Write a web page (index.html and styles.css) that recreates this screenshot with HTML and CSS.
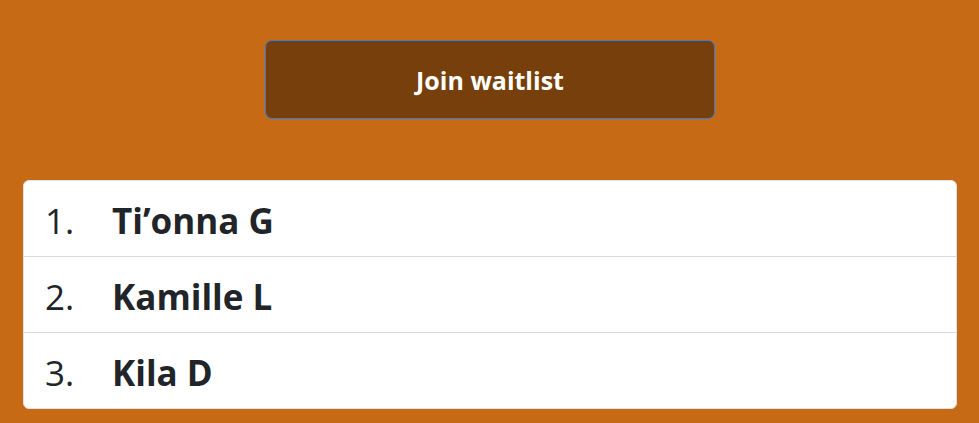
FILE: index.html
```html
<!DOCTYPE html>
<html lang="en">
<head>
<meta charset="utf-8">
<title>Waitlist</title>
<link rel="stylesheet" href="styles.css">
</head>
<body>
<main class="page">
  <div class="actions">
    <button class="join-btn" type="button">Join waitlist</button>
  </div>
  <ol class="waitlist">
    <li class="waitlist-item"><span class="num">1.</span><span class="name">Ti’onna G</span></li>
    <li class="waitlist-item"><span class="num">2.</span><span class="name">Kamille L</span></li>
    <li class="waitlist-item"><span class="num">3.</span><span class="name">Kila D</span></li>
  </ol>
</main>
</body>
</html>
```
FILE: styles.css
```css
html, body {
  margin: 0;
  padding: 0;
  background: #c66a16;
}
body {
  font-family: "Open Sans", "Noto Sans", sans-serif;
  color: #212529;
}
.page {
  padding: 40px 22px 0 23px;
}
.actions {
  display: flex;
  justify-content: center;
  margin-bottom: 61px;
}
.join-btn {
  width: 450px;
  height: 79px;
  background: #773f0b;
  color: #fff;
  border: 1px solid #2f7fe0;
  border-radius: 7px;
  font-family: inherit;
  font-weight: 700;
  font-size: 25px;
  padding: 0;
}
.waitlist {
  list-style: none;
  margin: 0;
  padding: 0;
  background: #fff;
  border: 1px solid #dee2e6;
  border-radius: 6px;
}
.waitlist-item {
  display: flex;
  align-items: center;
  height: 72px;
  padding: 3px 21px 0;
  font-size: 35px;
  border-top: 1px solid #dadada;
}
.waitlist-item:first-child {
  border-top: none;
}
.num {
  width: 67px;
  font-weight: 400;
}
.name {
  font-weight: 700;
}
```
